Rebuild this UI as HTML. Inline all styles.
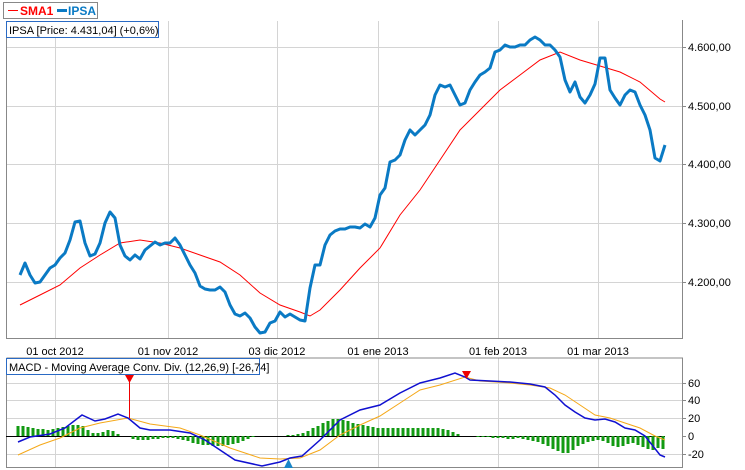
<!DOCTYPE html>
<html><head><meta charset="utf-8"><style>
body{margin:0;background:#fff;font-family:"Liberation Sans",sans-serif;}
svg{display:block}
text{font-family:"Liberation Sans",sans-serif;font-size:11px;fill:#000}
</style></head><body>
<svg width="745" height="470" viewBox="0 0 745 470">
<rect width="745" height="470" fill="#fff"/>
<!-- legend -->
<rect x="3.5" y="2.5" width="94" height="16" fill="#fff" stroke="#888"/>
<line x1="8" y1="10.5" x2="18" y2="10.5" stroke="#f00" stroke-width="1"/>
<text x="20" y="15" style="font-weight:bold;fill:#f00;font-size:12px">SMA1</text>
<line x1="57" y1="10.5" x2="67" y2="10.5" stroke="#0a7ac4" stroke-width="3"/>
<text x="68" y="15" style="font-weight:bold;fill:#0a7ac4;font-size:12px">IPSA</text>
<!-- main grid -->
<g stroke="#d4d4d4" stroke-width="1">
<line x1="6" y1="47.5" x2="682" y2="47.5"/><line x1="6" y1="106.5" x2="682" y2="106.5"/>
<line x1="6" y1="164.5" x2="682" y2="164.5"/><line x1="6" y1="223.5" x2="682" y2="223.5"/>
<line x1="6" y1="282.5" x2="682" y2="282.5"/>
<line x1="55.5" y1="21" x2="55.5" y2="338"/><line x1="168.5" y1="21" x2="168.5" y2="338"/>
<line x1="277.5" y1="21" x2="277.5" y2="338"/><line x1="378.5" y1="21" x2="378.5" y2="338"/>
<line x1="498.5" y1="21" x2="498.5" y2="338"/><line x1="598.5" y1="21" x2="598.5" y2="338"/>
</g>
<path d="M6.5 21V338.5H682.5V20" fill="none" stroke="#888"/>
<g stroke="#888"><line x1="682" y1="47.5" x2="686" y2="47.5"/><line x1="682" y1="106.5" x2="686" y2="106.5"/><line x1="682" y1="164.5" x2="686" y2="164.5"/><line x1="682" y1="223.5" x2="686" y2="223.5"/><line x1="682" y1="282.5" x2="686" y2="282.5"/></g>
<text x="688" y="51">4.600,00</text><text x="688" y="110">4.500,00</text><text x="688" y="168">4.400,00</text><text x="688" y="227">4.300,00</text><text x="688" y="286">4.200,00</text>
<g text-anchor="middle"><text x="55" y="355">01 oct 2012</text><text x="168" y="355">01 nov 2012</text><text x="277" y="355">03 dic 2012</text><text x="378" y="355">01 ene 2013</text><text x="498" y="355">01 feb 2013</text><text x="598" y="355">01 mar 2013</text></g>
<!-- SMA -->
<polyline fill="none" stroke="#f00" stroke-width="1" points="20,305 40,295 60,285 80,268 100,255 120,243 140,240 160,243 180,248 200,255 220,262 240,275 260,293 280,305 300,312 310,316 320,310 340,290 360,268 380,248 400,215 420,190 440,160 460,130 480,110 500,90 520,75 540,60 560,52 580,60 600,66 620,72 640,82 660,99 665,102"/>
<!-- IPSA -->
<polyline fill="none" stroke="#0a7ac4" stroke-width="3" stroke-linejoin="round" points="20,275 25,263 30,275 35,283 40,282 45,275 50,268 55,265 60,258 65,253 70,240 75,222 80,221 85,243 90,256 95,254 100,243 105,223 110,212 115,218 120,245 125,256 130,260 135,255 140,259 145,250 150,246 155,242 160,245 165,243 170,243 175,238 180,245 185,255 190,265 195,273 200,286 205,289 210,290 215,290 220,287 225,292 230,305 235,314 240,316 245,313 250,318 255,327 260,333 265,332 270,323 275,321 280,312 285,317 290,314 295,317 300,320 305,321 310,288 315,265 320,265 325,245 330,235 335,231 340,229 345,229 350,227 355,227 360,228 365,224 370,227 375,218 380,195 385,188 390,162 395,160 400,155 405,140 410,130 415,135 420,130 425,125 430,115 435,95 440,85 445,87 450,85 455,95 460,105 465,103 470,90 475,82 480,75 485,72 490,68 495,52 500,50 505,45 510,47 515,47 520,45 525,45 530,40 535,37 540,40 545,45 550,45 555,50 560,57 565,80 570,92 575,82 580,97 585,103 590,95 595,84 600,58 605,58 610,90 615,98 620,105 625,95 630,90 635,92 640,105 645,115 650,130 655,158 660,161 665,145"/>
<!-- title box -->
<rect x="6.5" y="21.5" width="152" height="16" fill="#fff" stroke="#2a6ac4"/>
<text x="9" y="34">IPSA [Price: 4.431,04] (+0,6%)</text>
<!-- MACD panel -->
<g stroke="#d4d4d4"><line x1="6" y1="383.5" x2="682" y2="383.5"/><line x1="6" y1="400.5" x2="682" y2="400.5"/><line x1="6" y1="418.5" x2="682" y2="418.5"/><line x1="6" y1="454.5" x2="682" y2="454.5"/>
<line x1="55.5" y1="358" x2="55.5" y2="467"/><line x1="168.5" y1="358" x2="168.5" y2="467"/><line x1="277.5" y1="358" x2="277.5" y2="467"/><line x1="378.5" y1="358" x2="378.5" y2="467"/><line x1="498.5" y1="358" x2="498.5" y2="467"/><line x1="598.5" y1="358" x2="598.5" y2="467"/></g>
<path d="M6.5 358V467.5H682.5V358H6.5" fill="none" stroke="#888"/>
<line x1="6" y1="436.5" x2="665" y2="436.5" stroke="#000"/>
<g stroke="#888"><line x1="682" y1="383.5" x2="686" y2="383.5"/><line x1="682" y1="400.5" x2="686" y2="400.5"/><line x1="682" y1="418.5" x2="686" y2="418.5"/><line x1="682" y1="436.5" x2="686" y2="436.5"/><line x1="682" y1="454.5" x2="686" y2="454.5"/></g>
<text x="688" y="387">60</text><text x="688" y="404">40</text><text x="688" y="422">20</text><text x="688" y="440">0</text><text x="688" y="458">-20</text>
<path fill="none" stroke="#129a12" stroke-width="3" d="M18 436v-10M23 436v-10M28 436v-9M33 436v-8M38 436v-7M43 436v-7M48 436v-6M53 436v-7M58 436v-8M63 436v-9M68 436v-10M73 436v-11M78 436v-11M83 436v-10M88 436v-6M93 436v-3M98 436v-3M103 436v-4M108 436v-6M113 436v-5M118 436v-2M133 436v3M138 436v4M143 436v4M148 436v4M153 436v3M158 436v3M163 436v2M168 436v2M173 436v2M178 436v3M183 436v4M188 436v5M193 436v7M198 436v8M203 436v9M208 436v9M213 436v10M218 436v10M223 436v10M228 436v9M233 436v8M238 436v7M243 436v5M248 436v3M253 436v1M288 436v-1M293 436v-1M298 436v-2M303 436v-3M308 436v-5M313 436v-8M318 436v-10M323 436v-13M328 436v-15M333 436v-17M338 436v-17M343 436v-16M348 436v-15M353 436v-13M358 436v-12M363 436v-11M368 436v-10M373 436v-9M378 436v-8M383 436v-8M388 436v-8M393 436v-8M398 436v-8M403 436v-8M408 436v-8M413 436v-8M418 436v-8M423 436v-8M428 436v-8M433 436v-8M438 436v-8M443 436v-7M448 436v-6M453 436v-4M458 436v-2M478 436v1M483 436v1M488 436v1M493 436v2M498 436v2M503 436v2M508 436v3M513 436v3M518 436v2M523 436v3M528 436v4M533 436v5M538 436v6M543 436v8M548 436v10M553 436v13M558 436v15M563 436v17M568 436v17M573 436v14M578 436v10M583 436v8M588 436v6M593 436v5M598 436v4M603 436v5M608 436v7M613 436v10M618 436v11M623 436v10M628 436v8M633 436v7M638 436v9M643 436v11M648 436v13M653 436v14M658 436v12M663 436v13"/>
<polyline fill="none" stroke="#f5a818" stroke-width="1" points="18,455 40,445 60,438 80,428 100,423 128,418 150,424 180,428 200,435 230,448 260,458 280,459 300,458 320,450 340,435 360,425 380,416 400,403 420,390 440,385 465,377 480,381 510,383 530,385 550,388 565,395 580,405 595,415 610,418 625,423 640,428 655,436 665,440"/>
<polyline fill="none" stroke="#1010d0" stroke-width="1.5" points="18,442 30,437 50,434 65,428 82,415 95,421 105,419 118,414 128,418 140,428 150,430 170,430 190,433 205,440 220,450 235,460 262,466 280,462 290,458 302,456 320,440 340,420 360,410 380,405 400,393 420,383 440,378 455,373 465,377 470,380 490,381 510,382 530,384 545,387 555,395 565,405 575,412 585,418 595,420 605,419 615,422 625,428 635,430 645,436 660,455 665,457"/>
<rect x="6.5" y="358.5" width="253" height="16" fill="#fff" stroke="#2a6ac4"/>
<text x="9" y="371">MACD - Moving Average Conv. Div. (12,26,9) [-26,74]</text>
<line x1="129.5" y1="378" x2="129.5" y2="418" stroke="#e00"/>
<polygon points="125,375 134,375 129.5,383" fill="#e00"/>
<polygon points="462,371 471,371 466.5,379" fill="#e00"/>
<polygon points="284,468 293,468 288.5,459" fill="#1a86c8"/>
</svg>
</body></html>
